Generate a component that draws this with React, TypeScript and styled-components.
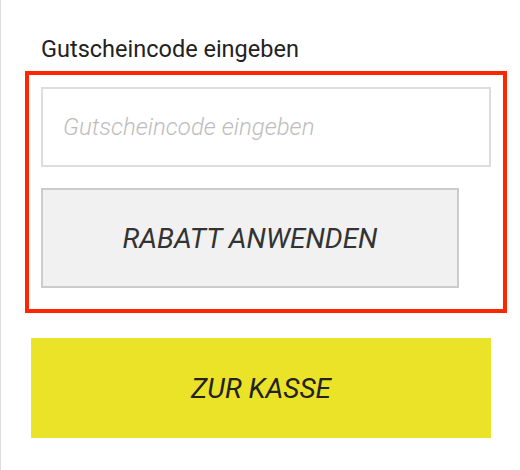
import React from "react";
import styled, {createGlobalStyle} from "styled-components";

const colors = {
    text: "#222222",
    placeholder: "#bdbdbd",
    inputBorder: "#dddddd",
    buttonBorder: "#cccccc",
    buttonBg: "#f1f1f1",
    highlight: "#ff2600",
    checkout: "#ebe328",
};

const GlobalStyle = createGlobalStyle`
  html, body {
    margin: 0;
    padding: 0;
    background: #ffffff;
    font-family: Roboto, "Liberation Sans", sans-serif;
  }
`;

const App = () => {
    return (
        <>
            <GlobalStyle/>
            <Sidebar>
                <Label htmlFor={"voucher"}>Gutscheincode eingeben</Label>
                <VoucherBox>
                    <VoucherInput id={"voucher"} placeholder={"Gutscheincode eingeben"}/>
                    <ApplyButton type={"button"}>RABATT ANWENDEN</ApplyButton>
                </VoucherBox>
                <CheckoutButton type={"button"}>ZUR KASSE</CheckoutButton>
            </Sidebar>
        </>
    );
};

const Sidebar = styled.div`
  display: flex;
  flex-direction: column;
  align-items: flex-start;
  box-sizing: border-box;
  height: 470px;
  width: 520px;
  padding: 35px 0 0 24px;
  border-left: 1px solid ${colors.inputBorder};
`;

const Label = styled.label`
  font-size: 23.5px;
  line-height: 28px;
  color: ${colors.text};
  margin: 0 0 8px 16px;
`;

const VoucherBox = styled.div`
  display: flex;
  flex-direction: column;
  align-items: flex-start;
  gap: 21px;
  box-sizing: border-box;
  width: 482px;
  padding: 12px 12px 21px;
  border: 4px solid ${colors.highlight};
`;

const VoucherInput = styled.input`
  box-sizing: border-box;
  width: 100%;
  height: 80px;
  padding: 0 20px;
  border: 2px solid ${colors.inputBorder};
  background: #ffffff;
  font-family: Roboto, "Liberation Sans", sans-serif;
  font-size: 24px;
  font-weight: 300;
  font-style: italic;
  color: ${colors.text};

  &::placeholder {
    color: ${colors.placeholder};
  }

  &:focus {
    outline: none;
  }
`;

const ApplyButton = styled.button`
  box-sizing: border-box;
  width: 418px;
  height: 100px;
  border: 2px solid ${colors.buttonBorder};
  background: ${colors.buttonBg};
  font-family: Roboto, "Liberation Sans", sans-serif;
  font-size: 28px;
  font-style: italic;
  color: #333333;
  cursor: pointer;
`;

const CheckoutButton = styled.button`
  box-sizing: border-box;
  width: 460px;
  height: 100px;
  margin: 25px 0 0 6px;
  border: none;
  background: ${colors.checkout};
  font-family: Roboto, "Liberation Sans", sans-serif;
  font-size: 28px;
  font-style: italic;
  color: ${colors.text};
  cursor: pointer;
`;

export default App;
